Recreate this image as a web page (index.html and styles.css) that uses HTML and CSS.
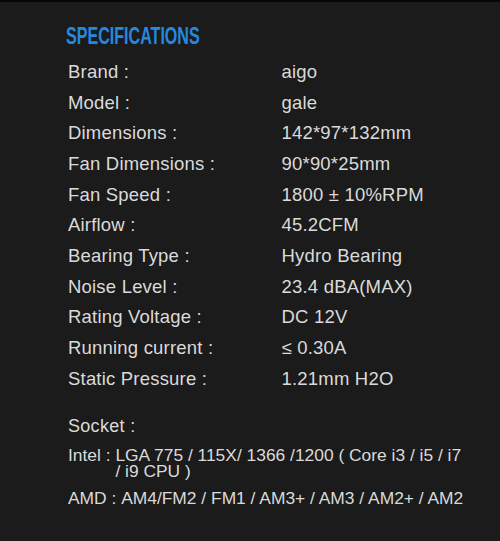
FILE: index.html
```html
<!DOCTYPE html>
<html>
<head>
<meta charset="utf-8">
<link rel="stylesheet" href="styles.css">
</head>
<body>
<div class="page">
  <h2 class="title"><span class="title-text">SPECIFICATIONS</span></h2>
  <div class="specs">
    <div class="label">Brand :</div><div class="value">aigo</div>
    <div class="label">Model :</div><div class="value">gale</div>
    <div class="label">Dimensions :</div><div class="value">142*97*132mm</div>
    <div class="label">Fan Dimensions :</div><div class="value">90*90*25mm</div>
    <div class="label">Fan Speed :</div><div class="value">1800 ± 10%RPM</div>
    <div class="label">Airflow :</div><div class="value">45.2CFM</div>
    <div class="label">Bearing Type :</div><div class="value">Hydro Bearing</div>
    <div class="label">Noise Level :</div><div class="value">23.4 dBA(MAX)</div>
    <div class="label">Rating Voltage :</div><div class="value">DC 12V</div>
    <div class="label">Running current :</div><div class="value">≤ 0.30A</div>
    <div class="label">Static Pressure :</div><div class="value">1.21mm H2O</div>
  </div>
  <div class="socket">
    <div class="socket-title">Socket :</div>
    <div class="socket-row intel"><span class="socket-key">Intel :&nbsp;</span><span class="socket-val">LGA 775 / 115X/ 1366 /1200 ( Core i3 / i5 / i7 / i9 CPU )</span></div>
    <div class="socket-row amd"><span class="socket-key">AMD :&nbsp;</span><span class="socket-val">AM4/FM2 / FM1 / AM3+ / AM3 / AM2+ / AM2</span></div>
  </div>
</div>
</body>
</html>
```

FILE: styles.css
```css
html, body {
  margin: 0;
  padding: 0;
  background: #1b1b1b;
}
body {
  width: 500px;
  height: 541px;
  overflow: hidden;
  border-top: 2px solid #060606;
  box-sizing: border-box;
  font-family: "Liberation Sans", Arial, sans-serif;
  color: #dadada;
}
.page {
  padding: 22px 0 0 68px;
}
.title {
  margin: 0 0 9px -2px;
  font-family: "Liberation Sans", Arial, sans-serif;
  font-weight: bold;
  font-size: 24px;
  line-height: 24px;
  color: #2489e0;
  height: 24px;
  white-space: nowrap;
}
.title-text {
  display: inline-block;
  transform: scaleX(0.67);
  transform-origin: left center;
}
.specs {
  display: grid;
  grid-template-columns: 213.5px auto;
  font-size: 18.5px;
  line-height: 30.66px;
  letter-spacing: 0.2px;
}
.socket {
  margin-top: 22px;
  font-size: 17.4px;
  width: 396px;
}
.socket-title {
  line-height: 20px;
  font-size: 18px;
  letter-spacing: 0.3px;
}
.socket-row {
  display: flex;
  line-height: 16px;
  margin-top: 11px;
}
.socket-key {
  white-space: nowrap;
  flex: none;
}
.socket-val {
  flex: 1;
}
.amd .socket-val {
  white-space: nowrap;
}
```
